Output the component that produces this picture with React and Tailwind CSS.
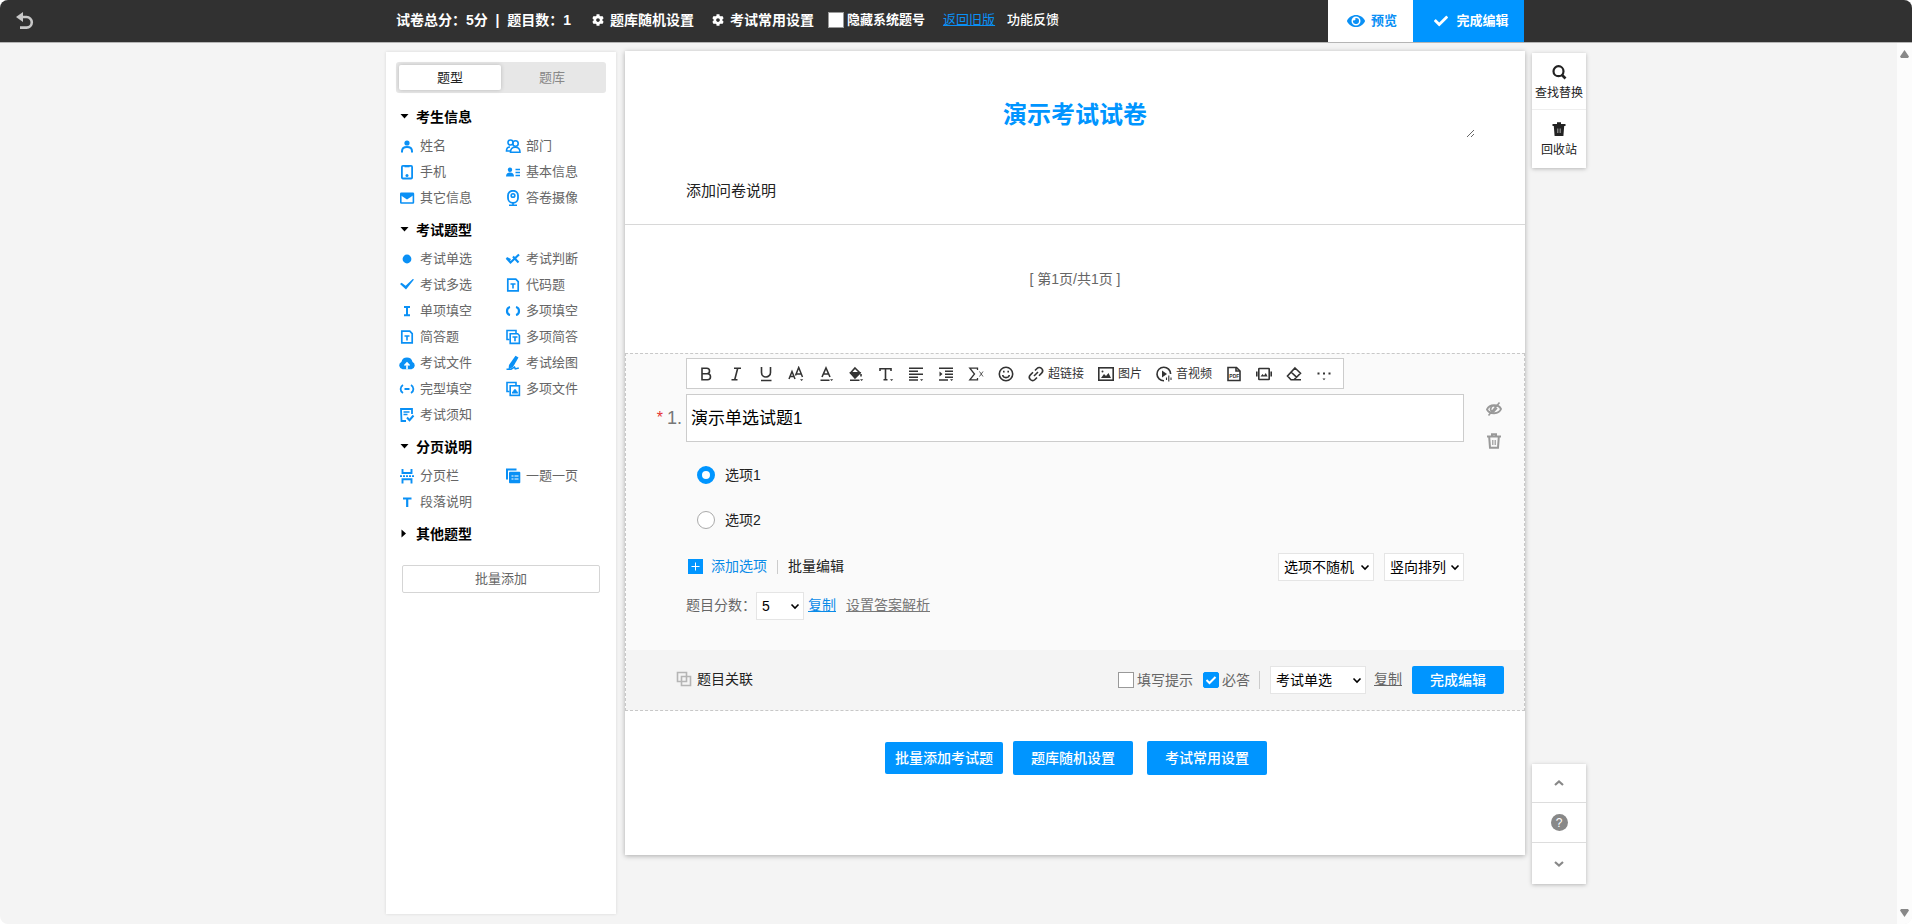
import React, { useState } from 'react'
import { FaCog, FaEye, FaCheck } from 'react-icons/fa'

const Svg = ({ size = 16, children, className = '' }) => (
  <svg
    width={size}
    height={size}
    viewBox="0 0 16 16"
    fill="none"
    stroke="currentColor"
    strokeWidth="1.6"
    className={`shrink-0 ${className}`}
    aria-hidden="true"
  >
    {children}
  </svg>
)

// Question type icons
const icons = {
  person: (
    <>
      <circle cx="8" cy="5" r="2.6" fill="currentColor" stroke="none" />
      <path d="M3 14.500v-1.200C3 10.500 5 9 8 9s5 1.500 5 4.300v1.200" strokeWidth="2" />
    </>
  ),
  people: (
    <>
      <circle cx="5.500" cy="4.500" r="2.500" />
      <circle cx="10.500" cy="5.500" r="2.700" />
      <path d="M5 9C2.500 9 1.500 10.500 1.500 13H5M5.500 14.300c0-3.300 1.500-5.100 4.700-5.100s4.800 1.800 4.800 5.100z" />
    </>
  ),
  phone: (
    <>
      <rect x="2.900" y="1.900" width="10.200" height="12.600" rx="1" strokeWidth="1.800" />
      <path d="M5.500 2.500h5" />
      <circle cx="8" cy="11.500" r="1.500" fill="currentColor" stroke="none" />
    </>
  ),
  card: (
    <>
      <circle cx="5" cy="5.800" r="2.200" fill="currentColor" stroke="none" />
      <path d="M1 12.500c0-2.600 1.500-4 4-4s4 1.400 4 4z" fill="currentColor" stroke="none" />
      <path d="M10.500 5.500H15M10.500 8.500H15M10.500 11.500H15" strokeWidth="1.300" />
    </>
  ),
  mail: (
    <>
      <rect x="1.800" y="3.200" width="12.600" height="9.800" rx="0.500" />
      <path d="M2 3h12v2.500L8 9.500 2 5.500z" fill="currentColor" stroke="none" />
    </>
  ),
  camera: (
    <>
      <rect x="3" y="0.800" width="10" height="12" rx="4.800" strokeWidth="1.800" />
      <circle cx="8" cy="5.500" r="1.800" />
      <path d="M8 12.500v2.500M4 15.200h8" />
    </>
  ),
  dot: <circle cx="8" cy="8" r="4.400" fill="currentColor" stroke="none" />,
  judge: (
    <path d="M1.500 7l4 4.500 8.500-8M8 5.500l5.500 6M1.500 7l4 2" strokeWidth="2.100" />
  ),
  check: (
    <path d="M1 7l1.600-1.300 4 3.100L13.800 2l1.200.500L7 12.500z" fill="currentColor" stroke="none" />
  ),
  doc: (
    <>
      <path d="M2.800 2.200h8l2.400 2.400v9.200H2.800z" strokeWidth="1.700" />
      <path d="M5.500 7h5M8 7v4.500" />
    </>
  ),
  textLine: <path d="M5 4h6M5 12.200h6M8 4v8" strokeWidth="2" />,
  brackets: <path d="M5 4C2.800 4.500 2 6 2 8s.800 3.500 3 4M11 4c2.200.500 3 2 3 4s-.800 3.500-3 4" strokeWidth="2.200" />,
  docs: (
    <>
      <path d="M4.500 10.500H2v-9h9v2.500" />
      <path d="M5.200 4.800h7.500l1.700 1.700v7.900H5.200z" />
      <path d="M7.500 8h5M10 8v4.200" />
    </>
  ),
  cloud: (
    <>
      <path d="M3.600 14.200A3.800 3.800 0 0 1 2.400 7 5.700 5.700 0 0 1 13.500 7 3.800 3.800 0 0 1 12.500 14.200z" fill="currentColor" stroke="none" />
      <path d="M8 14.200V8.500M5.500 10.500L8 8l2.500 2.500" stroke="#fff" />
    </>
  ),
  pen: (
    <>
      <path d="M10.500.800l3 1.700-5.500 9.500-4.500 2.500L4 10z" fill="currentColor" stroke="none" />
      <path d="M1.500 14.300h4.500l3.500-2.200.800 1.800 3.500-1" />
    </>
  ),
  cloze: <path d="M4 4C2.300 5 1.600 6.300 1.600 8s.700 3 2.400 4M12 4c1.700 1 2.400 2.300 2.400 4s-.700 3-2.400 4M5.500 8h5" strokeWidth="1.800" />,
  files: (
    <>
      <path d="M4.500 10.500H2v-9h9v2.500" />
      <rect x="5.200" y="4.800" width="9.200" height="9.600" />
      <path d="M7 12.500c-.200-1.500.500-2.200 1.200-2.300.500-2.600 3-2.600 3.500 0 .800.100 1.400.800 1.200 2.300z" fill="currentColor" stroke="none" />
    </>
  ),
  notice: (
    <>
      <path d="M7 14H2.500L2 2h11v5" strokeWidth="1.800" />
      <path d="M4.500 5h6M4.500 7.500h4" />
      <path d="M8 10.500l2.500 2.700 4-4.700" strokeWidth="2" />
    </>
  ),
  pageBreak: (
    <>
      <path d="M3.500 1v4h9V1M3.500 15.500v-4.300h9v4.300" strokeWidth="1.900" />
      <path d="M1 8.100h14" strokeDasharray="2 1" />
    </>
  ),
  onePage: (
    <>
      <path d="M2 11.500V1.500h9.500" strokeWidth="2" />
      <rect x="4" y="3.800" width="11.300" height="11.500" rx="1" fill="currentColor" stroke="none" />
      <path d="M6.500 8h2M9.500 8h4M6.500 11h2M9.500 11h4" stroke="#fff" strokeWidth="1.200" />
    </>
  ),
  letterT: <path d="M4 4.500h8.500M8.200 4.500v8.500" strokeWidth="2.200" />,
}

const sections = [
  {
    title: '考生信息',
    items: [
      ['person', '姓名'], ['people', '部门'],
      ['phone', '手机'], ['card', '基本信息'],
      ['mail', '其它信息'], ['camera', '答卷摄像'],
    ],
  },
  {
    title: '考试题型',
    items: [
      ['dot', '考试单选'], ['judge', '考试判断'],
      ['check', '考试多选'], ['doc', '代码题'],
      ['textLine', '单项填空'], ['brackets', '多项填空'],
      ['doc', '简答题'], ['docs', '多项简答'],
      ['cloud', '考试文件'], ['pen', '考试绘图'],
      ['cloze', '完型填空'], ['files', '多项文件'],
      ['notice', '考试须知'],
    ],
  },
  {
    title: '分页说明',
    items: [['pageBreak', '分页栏'], ['onePage', '一题一页'], ['letterT', '段落说明']],
  },
  { title: '其他题型', items: [] },
]

const Caret = () => <path d="M12 13.200h3.200l-1.600 1.800z" fill="currentColor" stroke="none" />

const tools = [
  { name: '加粗', icon: <path d="M4 2.200h4.800a2.700 2.700 0 0 1 0 5.500H4zM4 7.700h5.500a3 3 0 0 1 0 6H4z" /> },
  { name: '斜体', icon: <path d="M6 2.200h7M3.500 13.700h6M9.700 2.200l-3 11.500" /> },
  { name: '下划线', icon: <path d="M3.500 1v5.500a4.500 4.500 0 0 0 9 0V1M3 14.500h10.500" /> },
  { name: '字号', icon: <><path d="M1 13l3-7.500L7 13M2 10.500h4M7.500 9.500L10.700 1.500 14.500 11M8.500 8h5" strokeWidth="1.500" /><Caret /></> },
  { name: '文字颜色', icon: <><path d="M4 11L8 2l4 9M5.200 8h5.600M2.500 14.300h9" /><Caret /></> },
  { name: '背景颜色', icon: <><path d="M7 2l5 5-5 4.800L2.500 7z" /><path d="M3 6.800h8.500L7 11.500z" fill="currentColor" /><path d="M13 8v2.500M2 14.300h9.500" /><Caret /></> },
  { name: '字体', icon: <><path d="M2 5V2.700h11V5M7.500 2.700v11M5.500 13.700h4" /><Caret /></> },
  { name: '对齐', icon: <><path d="M1 2.200h14M1 5.200h9M1 8.200h14M1 11.200h9M1 14h9" /><Caret /></> },
  { name: '缩进', icon: <><path d="M1 2.200h14M7 5.200h8M7 8.200h8M7 11.200h8M1 14h9" /><path d="M1.500 5.500l3 2.500-3 2.500z" fill="currentColor" stroke="none" /><Caret /></> },
  { name: '公式', icon: <><path d="M9.500 4V2.200H1.800L6.500 8l-4.700 5.800h7.700V12" strokeWidth="1.300" /><path d="M11.500 5.500l3.500 5M15 5.500l-3.500 5" strokeWidth="0.800" /></> },
  { name: '表情', icon: <><circle cx="8" cy="8" r="6.700" /><path d="M4.700 9c.500 3.500 6.100 3.500 6.600 0" /><path d="M5.800 4.800v1.800M10.200 4.800v1.800" /></> },
  { name: '超链接', text: true, icon: <path d="M6 10l4-4M7 4.500l2-2a3.200 3.200 0 0 1 4.600 4.600L11 9.700M9 11.500l-2 2a3.200 3.200 0 0 1-4.600-4.600L5 6.300" /> },
  { name: '图片', text: true, icon: <><rect x="0.800" y="1.800" width="14.400" height="12.400" /><path d="M3 12l3-4 2 2 2.500-3L13 12z" fill="currentColor" stroke="none" /><circle cx="4.500" cy="5.500" r="1" fill="currentColor" stroke="none" /></> },
  { name: '音视频', text: true, icon: <><path d="M14.600 8A6.800 6.800 0 1 0 8 14.800" /><path d="M6 4.500l5 3.500-5 3.500z" fill="currentColor" stroke="none" /><path d="M10.500 11.500v2.500M12.800 9.500v6M15 11.500v2.500" strokeWidth="1.100" /></> },
  { name: 'PDF', icon: <><path d="M2 1.500h8.500L14 5v9.500H2z" /><path d="M10 1.500V5h4" /><text x="3.300" y="12" fontSize="5" fontFamily="Liberation Sans" fontWeight="700" fill="currentColor" stroke="none">PDF</text></> },
  { name: '轮播图', icon: <><rect x="2.800" y="2.500" width="10.400" height="11" rx="0.500" /><path d="M.800 5.500v5M15.200 5.500v5" strokeWidth="1.600" /><path d="M4.500 10.500l2-2.500 1.500 1.500L9.800 7l1.800 3.500z" fill="currentColor" stroke="none" /></> },
  { name: '清除格式', icon: <path d="M9 2l5.500 5.200L8 13.700H5L1.500 10zM5 6l5.500 5.200M7 13.800h8" /> },
  { name: '更多', icon: <><path d="M1.500 7.500h2M7 7.500h2M12.500 7.500h2" strokeWidth="1.800" /><path d="M6.500 12.500h3L8 14.200z" fill="currentColor" stroke="none" /></> },
]

const Checkbox = ({ id, label, checked, onChange, className = '' }) => (
  <label htmlFor={id} className={`flex items-center gap-[3px] ${className}`}>
    <span className="relative flex">
      <input
        id={id}
        type="checkbox"
        checked={checked}
        onChange={onChange}
        className="size-4 appearance-none border border-[#999] bg-white checked:rounded-xs checked:border-[#0095ff] checked:bg-[#0095ff]"
      />
      {checked && (
        <Svg className="pointer-events-none absolute inset-0 text-white">
          <path d="M3.500 8l3 3 6-6" strokeWidth="2" />
        </Svg>
      )}
    </span>
    {label}
  </label>
)

const Select = ({ id, label, options, className = '' }) => (
  <span className={`relative flex ${className}`}>
    <select
      id={id}
      aria-label={label}
      className="h-7 w-full appearance-none border border-[#e5e5e5] bg-white pl-[5px] text-sm text-black"
    >
      {options.map((option) => (
        <option key={option}>{option}</option>
      ))}
    </select>
    <svg
      width="10"
      height="10"
      viewBox="0 0 10 10"
      fill="none"
      className="pointer-events-none absolute right-1 top-[9px] text-black"
      aria-hidden="true"
    >
      <path d="M1.500 3.500L5 7l3.500-3.500" stroke="currentColor" strokeWidth="1.600" />
    </svg>
  </span>
)

const Header = () => {
  const [hideNo, setHideNo] = useState(false)

  return (
    <header className="grid h-[43px] grid-cols-[1fr_1140px_1fr] border-b border-[#b5b5b5] bg-[#313131] text-sm font-bold text-white">
      <button aria-label="返回" className="ml-4 flex items-center self-start pt-3 text-[#c8c8c8]">
        <svg width="18" height="17" viewBox="0 0 18 17" fill="none" aria-hidden="true">
          <path d="M0 5L7 0v10z" fill="currentColor" />
          <path d="M5 5h5.500a5.300 5.300 0 0 1 0 10.600H4" stroke="currentColor" strokeWidth="2.600" />
        </svg>
      </button>
      <div className="flex justify-between pl-[10px] pr-[2px]">
        <div className="flex h-10 items-center">
          <span className="whitespace-pre">试卷总分：5分  |  题目数：1</span>
          <button className="ml-[21px] flex items-center gap-[6px]">
            <FaCog className="size-3" />
            题库随机设置
          </button>
          <button className="ml-[18px] flex items-center gap-[6px]">
            <FaCog className="size-3" />
            考试常用设置
          </button>
          <Checkbox
            id="hideNo"
            label="隐藏系统题号"
            checked={hideNo}
            onChange={(e) => setHideNo(e.target.checked)}
            className="ml-[14px] text-[13px]"
          />
          <a href="#old" className="ml-[18px] text-[13px] font-normal text-[#0a90f5] underline">返回旧版</a>
          <a href="#feedback" className="ml-3 text-[13px] font-medium">功能反馈</a>
        </div>
        <div className="flex text-[13px]">
          <button className="flex w-[85px] items-center justify-center gap-[6px] bg-white pl-[3px] text-[#0a90f5]">
            <FaEye className="size-[18px]" />
            预览
          </button>
          <button className="flex w-[111px] items-center justify-center gap-2 bg-[#0095ff] pl-[6px]">
            <FaCheck className="size-[14px]" />
            完成编辑
          </button>
        </div>
      </div>
    </header>
  )
}

const Sidebar = () => (
  <aside className="mb-[10px] mt-[9px] w-[230px] bg-white px-[10px] pt-[10px] shadow-[0_0_3px_rgba(0,0,0,0.12)]">
    <div className="flex h-[31px] rounded-[3px] bg-[#e7e7e7] p-[3px] text-[13px]">
      <button className="flex-1 rounded-xs bg-white text-[#222] shadow-[0_0_4px_rgba(0,0,0,0.2)]">题型</button>
      <button className="flex-1 text-[#888]">题库</button>
    </div>
    <div className="pt-[5px]">
      {sections.map((section) => (
        <section key={section.title}>
          <h2 className="flex h-[35px] items-center gap-[7px] pl-1 pt-[2px] text-sm font-bold text-black">
            <svg width="9" height="9" viewBox="0 0 9 9" aria-hidden="true">
              <path d={section.items.length ? 'M.500 2h8L4.500 6.500z' : 'M1.500.500v8L6 4.500z'} />
            </svg>
            {section.title}
          </h2>
          <ul className="grid grid-cols-[106px_1fr] pl-[3px]">
            {section.items.map(([icon, label]) => (
              <li key={label} className="h-[26px]">
                <button className="flex h-full items-center gap-[5px] text-[13px] text-[#666]">
                  <Svg className="text-[#0a90f5]">{icons[icon]}</Svg>
                  {label}
                </button>
              </li>
            ))}
          </ul>
        </section>
      ))}
    </div>
    <button className="mx-[6px] mt-[15px] h-7 w-[198px] rounded-xs border border-[#d5d5d5] text-[13px] text-[#666]">
      批量添加
    </button>
  </aside>
)

const Toolbar = () => (
  <div className="flex h-[31px] w-fit items-center self-start border border-[#ccc] bg-white px-1 text-xs text-[#333]">
    {tools.map((tool) =>
      tool.text ? (
        <button key={tool.name} className="flex items-center gap-1 px-[7px]">
          <Svg>{tool.icon}</Svg>
          {tool.name}
        </button>
      ) : (
        <button key={tool.name} aria-label={tool.name} className="flex w-[30px] justify-center">
          <Svg>{tool.icon}</Svg>
        </button>
      )
    )}
  </div>
)

const Question = () => {
  const [answer, setAnswer] = useState('选项1')
  const [tip, setTip] = useState(false)
  const [required, setRequired] = useState(true)

  return (
    <section className="border border-dashed border-[#c8c8c8] bg-[#fafafa] text-sm">
      <div className="grid grid-cols-[60px_1fr_60px] pb-[30px] pt-1">
        <div className="flex items-center justify-end gap-1 self-start pr-1 pt-[46px] text-lg leading-7 text-[#777]">
          <span className="text-base text-[#e53333]">*</span>1.
        </div>
        <div className="flex flex-col">
          <Toolbar />
          <input
            aria-label="题目标题"
            defaultValue="演示单选试题1"
            className="mt-[5px] h-12 border border-[#ccc] bg-white px-1 pb-1 text-[17px] text-black outline-none"
          />
          <div className="mt-[10px] pl-[11px]">
            {['选项1', '选项2'].map((option) => (
              <label key={option} className="flex h-[45px] items-center gap-[10px] text-[#222]">
                <input
                  type="radio"
                  name="answer"
                  checked={answer === option}
                  onChange={() => setAnswer(option)}
                  className="size-[18px] appearance-none rounded-full border border-[#aaa] bg-white checked:border-[5px] checked:border-[#0095ff]"
                />
                {option}
              </label>
            ))}
          </div>
          <div className="mt-[11px] flex items-center">
            <button className="flex items-center gap-2 pb-[2px] pl-[2px] text-[#0a8be8]">
              <svg width="15" height="15" viewBox="0 0 15 15" aria-hidden="true">
                <rect width="15" height="15" fill="#0095ff" />
                <path d="M3.500 7.500h8M7.500 3.500v8" stroke="#fff" />
              </svg>
              添加选项
            </button>
            <span className="mx-[10px] h-[14px] w-px bg-[#ccc]" />
            <button className="pb-[2px] text-[#222]">批量编辑</button>
            <Select label="选项随机" options={['选项不随机', '选项随机']} className="ml-auto w-24" />
            <Select label="排列方式" options={['竖向排列', '横向排列']} className="ml-[10px] w-20" />
          </div>
          <div className="mt-[11px] flex items-center text-[#666]">
            <label htmlFor="score" className="pb-[2px]">题目分数：</label>
            <Select id="score" options={['5', '10']} className="w-12" />
            <a href="#copy-score" className="ml-1 pb-[2px] text-[#0a8be8] underline">复制</a>
            <a href="#analysis" className="ml-[10px] pb-[2px] text-[#777] underline">设置答案解析</a>
          </div>
        </div>
        <div className="flex flex-col items-center gap-4 pt-[43px] text-[#999]">
          <button aria-label="隐藏题目">
            <Svg>
              <path d="M1 8.500C3.500 3 12.500 3 15 8c-2 5.500-11.500 5.500-14 .500z" strokeWidth="1.900" />
              <path d="M9.500 5.500A3 3 0 0 0 6 10.500M13.500 1.500l-11 13M11 7l-4 4.500" />
            </Svg>
          </button>
          <button aria-label="删除题目">
            <Svg>
              <path d="M1 3.500h14M6 2.500V1.200h4v1.300M3.200 4l.800 10.700h8L12.800 4" strokeWidth="2" />
              <path d="M6.800 7v5M9.200 7v5" strokeWidth="1.200" />
            </Svg>
          </button>
        </div>
      </div>
      <div className="flex h-[60px] items-center bg-[#f4f4f4] pl-[50px] pr-5 text-[#666]">
        <button className="flex items-center gap-[5px] pb-[3px] text-[#222]">
          <Svg className="text-[#b5b5b5]">
            <path d="M1.500 1.500h9v9h-9z" />
            <path d="M5.500 5.500h9v9h-9z" />
          </Svg>
          题目关联
        </button>
        <Checkbox id="tip" label="填写提示" checked={tip} onChange={(e) => setTip(e.target.checked)} className="ml-auto" />
        <Checkbox id="required" label="必答" checked={required} onChange={(e) => setRequired(e.target.checked)} className="ml-[10px]" />
        <span className="ml-[9px] mr-[10px] h-[18px] w-px bg-[#ccc]" />
        <Select label="题型" options={['考试单选', '考试多选']} className="w-24" />
        <a href="#copy" className="ml-2 pb-[2px] underline">复制</a>
        <button className="ml-[10px] h-7 w-[92px] rounded-xs bg-[#0095ff] font-medium text-white">完成编辑</button>
      </div>
    </section>
  )
}

const Paper = () => (
  <main className="mt-2 flex-1 self-start bg-white shadow-[0_1px_5px_rgba(0,0,0,0.3)]">
    <div className="border-b border-[#d8d8d8] px-[50px] pb-[21px] pt-[46px]">
      <textarea
        aria-label="试卷标题"
        rows={1}
        defaultValue="演示考试试卷"
        className="block h-[41px] w-full resize overflow-hidden text-center text-2xl leading-9 font-bold text-[#0095ff] outline-none"
      />
      <p className="mt-[41px] pl-[11px] text-[15px] leading-6 text-[#222]">添加问卷说明</p>
    </div>
    <p className="pb-16 pt-11 text-center text-sm leading-5 text-[#666]">[ 第1页/共1页 ]</p>
    <Question />
    <div className="flex items-center justify-center pb-20 pl-[2px] pt-[30px] text-sm font-medium text-white">
      <button className="h-8 w-[118px] rounded-xs bg-[#0095ff]">批量添加考试题</button>
      <button className="ml-[10px] h-[34px] w-[120px] rounded-xs bg-[#0095ff]">题库随机设置</button>
      <button className="ml-[14px] h-[34px] w-[120px] rounded-xs bg-[#0095ff]">考试常用设置</button>
    </div>
  </main>
)

const SideTools = () => (
  <div className="flex w-[54px] flex-col justify-between pb-10 pt-[10px] text-xs text-[#222]">
    <div className="divide-y divide-[#eee] bg-white shadow-[0_1px_4px_rgba(0,0,0,0.25)]">
      <button className="flex h-[57px] w-full flex-col items-center justify-center gap-[5px] whitespace-nowrap pt-[2px]">
        <Svg>
          <circle cx="7.500" cy="7.200" r="5" strokeWidth="2.200" />
          <path d="M10.500 10.500l4 4" strokeWidth="2.600" />
        </Svg>
        查找替换
      </button>
      <button className="flex h-[58px] w-full flex-col items-center justify-center gap-[5px] pt-px">
        <Svg>
          <path d="M1.500 3h13v2h-13zM6 1.200h4V3H6zM2.800 5h10.400l-.800 10H3.600z" fill="currentColor" stroke="none" />
          <path d="M6.800 7.500v4.500M9.200 7.500v4.500" stroke="#aaa" strokeWidth="1" />
        </Svg>
        回收站
      </button>
    </div>
    <div className="divide-y divide-[#ddd] bg-white text-[#888] shadow-[0_1px_4px_rgba(0,0,0,0.25)]">
      <button aria-label="上一题" className="flex h-[39px] w-full items-center justify-center">
        <Svg><path d="M4 10l4-3.500 4 3.500" strokeWidth="2.200" /></Svg>
      </button>
      <button aria-label="帮助" className="flex h-10 w-full items-center justify-center">
        <span className="flex size-[17px] items-center justify-center rounded-full bg-[#888] text-xs text-white">?</span>
      </button>
      <button aria-label="下一题" className="flex h-[41px] w-full items-center justify-center">
        <Svg><path d="M4 6l4 3.500L12 6" strokeWidth="2.200" /></Svg>
      </button>
    </div>
  </div>
)

const ScrollTrack = () => (
  <div className="flex w-[15px] flex-col items-center justify-between bg-[#fcfcfc] py-[7px] text-[#888]">
    <svg width="9" height="8" viewBox="0 0 9 8" aria-hidden="true">
      <path d="M4.500 0L9 6.500 8 8H1L0 6.500z" fill="currentColor" />
    </svg>
    <svg width="9" height="8" viewBox="0 0 9 8" aria-hidden="true">
      <path d="M4.500 8L9 1.500 8 0H1L0 1.500z" fill="currentColor" />
    </svg>
  </div>
)

export default function App() {
  return (
    <div className="flex min-h-screen flex-col overflow-hidden rounded-lg bg-[#f4f4f4] font-['Liberation_Sans','Noto_Sans_CJK_SC',sans-serif]">
      <Header />
      <div className="grid flex-1 grid-cols-[1fr_1140px_1fr]">
        <div />
        <div className="flex gap-[9px] pr-px">
          <Sidebar />
          <Paper />
        </div>
        <div className="flex justify-between pl-[6px]">
          <SideTools />
          <ScrollTrack />
        </div>
      </div>
    </div>
  )
}
